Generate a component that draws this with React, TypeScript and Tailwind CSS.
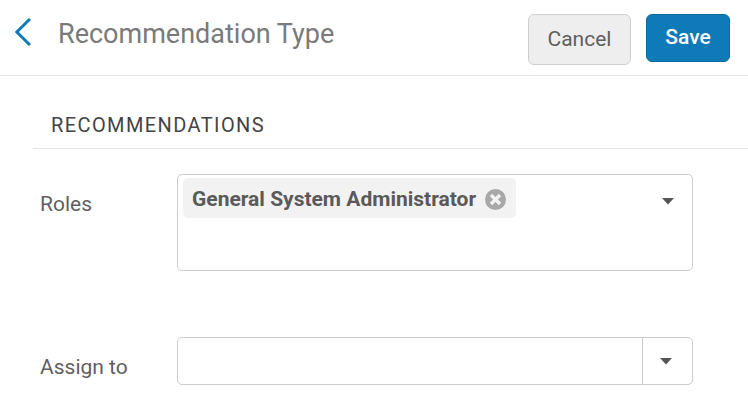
export default function App() {
  return (
    <div className="w-[748px] h-[417px] overflow-hidden bg-white font-['Roboto',sans-serif]">
      <header className="h-[76px] border-b border-[#e4e4e4] flex items-start">
        <button className="ml-[15px] mt-[18px] w-[16px] h-[28px] flex">
          <svg width="16" height="28" viewBox="0 0 16 28" fill="none">
            <path d="M15 1 L1.8 14 L15 27" stroke="#0f7ab8" strokeWidth="3" />
          </svg>
        </button>
        <h1 className="ml-[27px] mt-[18px] text-[27px] leading-[32px] text-[#7a7a7a] font-normal">Recommendation Type</h1>
        <div className="ml-auto mr-[18px] mt-[14px] flex gap-[15px] items-start">
          <button className="w-[103px] h-[51px] rounded-[6px] border border-[#cfcfcf] bg-[#eeeeee] text-[21px] text-[#5f5f5f]">Cancel</button>
          <button className="w-[84px] h-[48px] rounded-[6px] border border-[#0d6ca3] bg-[#0f7ab8] text-[21px] font-medium text-white">Save</button>
        </div>
      </header>
      <section className="ml-[33px]">
        <div className="h-[73px] border-b border-[#e4e4e4] pl-[18px] pt-[37px] text-[20px] leading-[24px] tracking-[1.4px] text-[#444444]">RECOMMENDATIONS</div>
        <div className="mt-[25px] flex">
          <label className="w-[144px] pl-[7px] pt-[18px] text-[21px] leading-[24px] text-[#5f5f5f]">Roles</label>
          <div className="w-[516px] h-[97px] rounded-[5px] border border-[#cccccc] pl-[5px] pt-[3px] pr-[18px] flex items-start justify-between">
            <span className="w-[333px] h-[40px] rounded-[5px] bg-[#f2f2f2] flex items-center pl-[9px] pt-[3px] gap-[9px] text-[21px] font-bold text-[#5a5a5a]">
              General System Administrator
              <svg width="21" height="21" viewBox="0 0 21 21">
                <circle cx="10.5" cy="10.5" r="10.5" fill="#a8a8a8" />
                <path d="M6 6 L15 15 M15 6 L6 15" stroke="#f2f2f2" strokeWidth="3.4" />
              </svg>
            </span>
            <svg className="mt-[20px]" width="12" height="7" viewBox="0 0 12 7">
              <path d="M0 0 H12 L6 6.5 Z" fill="#555555" />
            </svg>
          </div>
        </div>
        <div className="mt-[66px] flex">
          <label className="w-[144px] pl-[7px] pt-[18px] text-[21px] leading-[24px] text-[#5f5f5f]">Assign to</label>
          <div className="w-[516px] h-[48px] rounded-[5px] border border-[#cccccc] flex justify-end">
            <div className="w-[50px] pr-[4px] border-l border-[#cccccc] flex items-center justify-center">
              <svg width="12" height="7" viewBox="0 0 12 7">
                <path d="M0 0 H12 L6 6.5 Z" fill="#555555" />
              </svg>
            </div>
          </div>
        </div>
      </section>
    </div>
  );
}
